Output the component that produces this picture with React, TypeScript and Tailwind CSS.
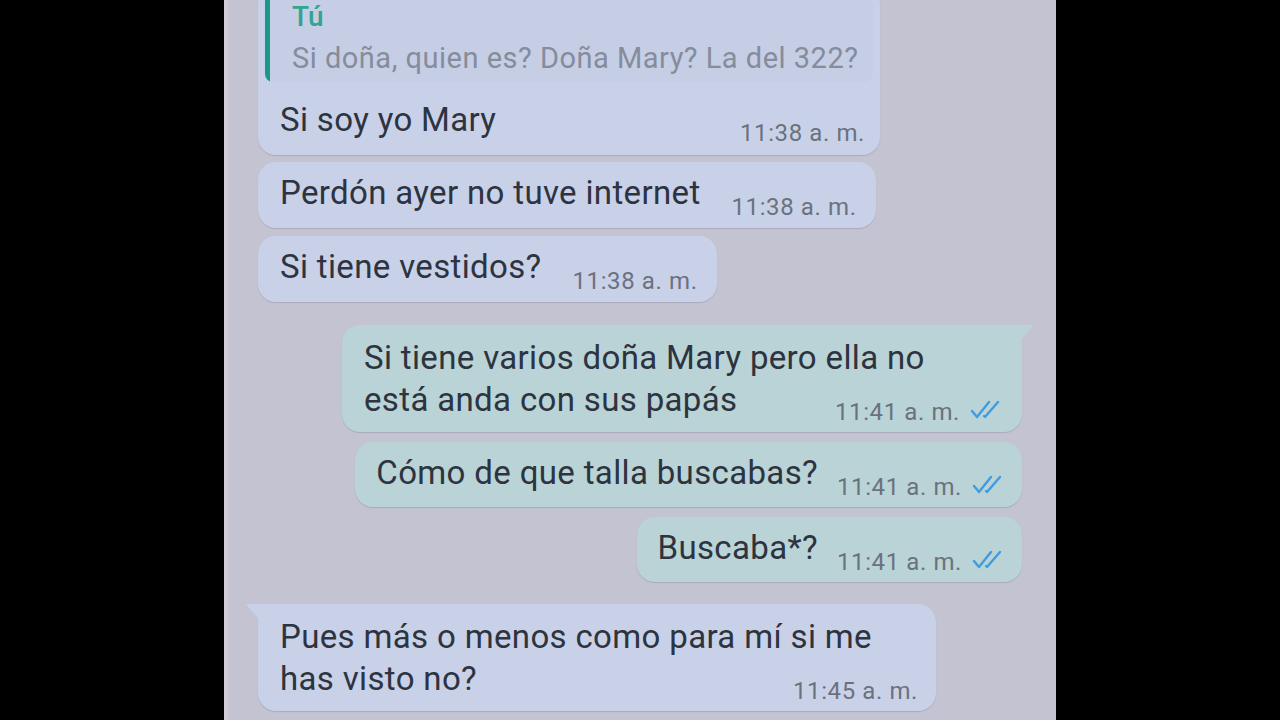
import React from 'react'

const font = { fontFamily: 'Roboto, "Noto Sans", sans-serif' }

function Ticks() {
  return (
    <svg width="32" height="20" viewBox="0 0 32 20" fill="none" className="shrink-0 ml-[10px] mb-[3px]">
      <path d="M2 11l5 6L19 2" stroke="#3f9ddf" strokeWidth="2.4" strokeLinecap="round" strokeLinejoin="round" />
      <path d="M14 16l1 1L28 2" stroke="#3f9ddf" strokeWidth="2.4" strokeLinecap="round" strokeLinejoin="round" />
    </svg>
  )
}

function Time({ t, read }: { t: string; read?: boolean }) {
  return (
    <div className="flex items-end shrink-0">
      <span className="text-[24px] leading-[22px] tracking-[0.6px] text-[#6b727d] whitespace-nowrap">{t}</span>
      {read && <Ticks />}
    </div>
  )
}

const msg = 'text-[33px] leading-[42px] tracking-[0.35px] text-[#2d3440] whitespace-nowrap'

function In({ text, time }: { text: string; time: string }) {
  return (
    <div className="self-start rounded-[18px] bg-[#c9d1e9] shadow-[0_1px_1px_rgba(60,60,90,0.18)] pl-[22px] pr-[19px] pt-[10px] pb-[10px]">
      <div className="flex items-end gap-[31px]">
        <span className={`${msg} pb-[4px]`}>{text}</span>
        <Time t={time} />
      </div>
    </div>
  )
}

function Out({ text, time }: { text: string; time: string }) {
  return (
    <div className="self-end rounded-[18px] bg-[#b9d3d6] shadow-[0_1px_1px_rgba(60,60,90,0.18)] pl-[21px] pr-[18px] pt-[10px] pb-[9px]">
      <div className="flex items-end gap-[19px]">
        <span className={`${msg} pb-[4px]`}>{text}</span>
        <Time t={time} read />
      </div>
    </div>
  )
}

export default function App() {
  return (
    <div className="w-[1280px] h-[720px] bg-black flex justify-center overflow-hidden" style={font}>
      <div className="w-[832px] h-[720px] bg-[#c4c3d2] border-l-[4px] border-[#cfccd6] flex flex-col pl-[30px] pr-[34px]">
        {/* quoted reply, cut off at the top */}
        <div className="self-start w-[622px] -mt-[14px] rounded-[18px] bg-[#c9d1e9] shadow-[0_1px_1px_rgba(60,60,90,0.18)] pt-[7px] px-[7px] pb-[11px]">
          <div className="flex rounded-[8px] bg-[#c6cee6] overflow-hidden">
            <div className="w-[5px] bg-[#179a86] shrink-0" />
            <div className="pl-[22px] pt-[9px] pb-[9px]">
              <div className="text-[28px] leading-[30px] font-medium text-[#33a392]">Tú</div>
              <div className="mt-[11px] text-[29px] leading-[30px] tracking-[0.5px] text-[#858c9c] whitespace-nowrap">
                Si doña, quien es? Doña Mary? La del 322?
              </div>
            </div>
          </div>
          <div className="flex items-end justify-between mt-[17px] pl-[15px] pr-[8px]">
            <span className={`${msg} pb-[3px]`}>Si soy yo Mary</span>
            <Time t="11:38 a. m." />
          </div>
        </div>

        <div className="mt-[7px] flex flex-col">
          <In text="Perdón ayer no tuve internet" time="11:38 a. m." />
        </div>
        <div className="mt-[8px] flex flex-col">
          <In text="Si tiene vestidos?" time="11:38 a. m." />
        </div>

        {/* outgoing group */}
        <div className="relative self-end w-[680px] mt-[23px] rounded-[18px] rounded-tr-none bg-[#b9d3d6] shadow-[0_1px_1px_rgba(60,60,90,0.18)] pl-[22px] pr-[20px] pt-[12px] pb-[9px]">
          <svg width="14" height="16" viewBox="0 0 14 16" className="absolute -right-[12px] top-0">
            <path d="M0 0H13Q14 0 13 1.5L0 16Z" fill="#b9d3d6" />
          </svg>
          <div className={msg}>Si tiene varios doña Mary pero ella no</div>
          <div className="flex items-end justify-between">
            <span className={`${msg} pb-[2px]`}>está anda con sus papás</span>
            <Time t="11:41 a. m." read />
          </div>
        </div>
        <div className="mt-[10px] flex flex-col">
          <Out text="Cómo de que talla buscabas?" time="11:41 a. m." />
        </div>
        <div className="mt-[10px] flex flex-col">
          <Out text="Buscaba*?" time="11:41 a. m." />
        </div>

        {/* incoming with tail */}
        <div className="relative self-start w-[678px] mt-[22px] rounded-[18px] rounded-tl-none bg-[#c9d1e9] shadow-[0_1px_1px_rgba(60,60,90,0.18)] pl-[22px] pr-[18px] pt-[12px] pb-[9px]">
          <svg width="14" height="16" viewBox="0 0 14 16" className="absolute -left-[12px] top-0">
            <path d="M14 0H1Q0 0 1 1.5L14 16Z" fill="#c9d1e9" />
          </svg>
          <div className={msg}>Pues más o menos como para mí si me</div>
          <div className="flex items-end justify-between">
            <span className={`${msg} pb-[2px]`}>has visto no?</span>
            <Time t="11:45 a. m." />
          </div>
        </div>
      </div>
    </div>
  )
}
